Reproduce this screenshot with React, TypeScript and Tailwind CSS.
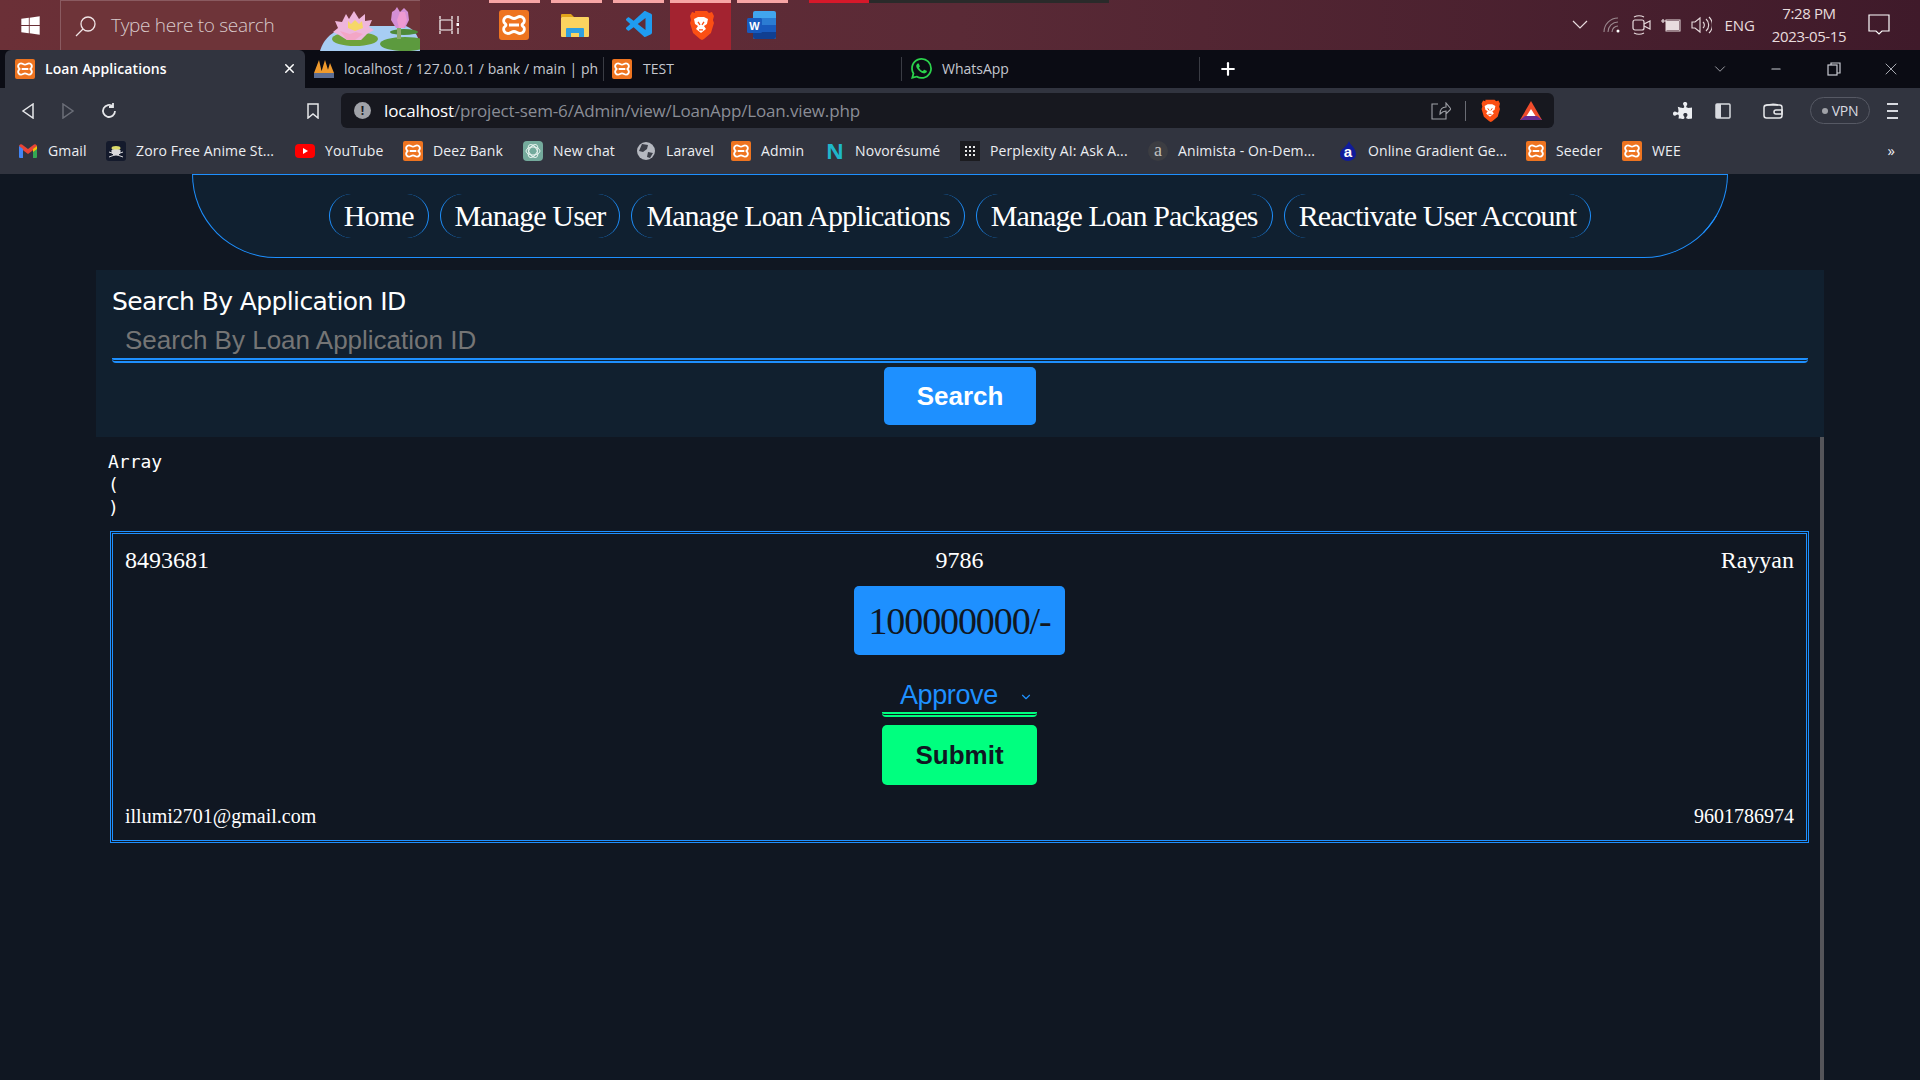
import { ChevronDown, Minus, Plus, X } from 'lucide-react';
import { FaPuzzlePiece, FaWindows } from 'react-icons/fa';
import { SiWhatsapp } from 'react-icons/si';
import { VscVscode } from 'react-icons/vsc';

const navLinks = ['Home', 'Manage User', 'Manage Loan Applications', 'Manage Loan Packages', 'Reactivate User Account'];

// small orange tile used for every localhost favicon
function Xampp({ size = 20 }: { size?: number }) {
  return (
    <svg width={size} height={size} viewBox="0 0 30 30" className="shrink-0">
      <rect width="30" height="30" rx="3" fill="#ee7420" />
      <path
        d="M9 6.5c2.5 0 3.5 2 6 2s3.5-2 6-2a4.3 4.3 0 0 1 3.8 6.3c-.7 1-1.8 1.2-1.8 2.2s1.1 1.2 1.8 2.2A4.3 4.3 0 0 1 21 23.5c-2.5 0-3.5-2-6-2s-3.5 2-6 2a4.3 4.3 0 0 1-3.8-6.3c.7-1 1.8-1.2 1.8-2.2s-1.1-1.2-1.8-2.2A4.3 4.3 0 0 1 9 6.5zM10 15h10"
        fill="none"
        stroke="#fff"
        strokeWidth="2.8"
      />
    </svg>
  );
}

function BraveLion({ size = 30 }: { size?: number }) {
  return (
    <svg width={size} height={size * 1.15} viewBox="0 0 26 30" className="shrink-0">
      <path d="M7 1h12l2 2 3-1 2 4-1 4 1 3-3 10-7 6-2 1-2-1-7-6L2 13l1-3-1-4 2-4 3 1z" fill="#fb4f14" />
      <path d="M6 9l4-2h6l4 2-1 5-3 2 2 3-5 4-5-4 2-3-3-2z" fill="#fff" />
      <path d="M10 12l2 3M16 12l-2 3M11 20h4" stroke="#fb4f14" strokeWidth="1.3" fill="none" />
    </svg>
  );
}

function Lotus() {
  return (
    <svg width="100" height="50" viewBox="0 0 100 50" className="shrink-0">
      <path d="M0 50c4-14 16-24 36-25h50c10 4 14 12 14 25z" fill="#a7cdf3" />
      <ellipse cx="35" cy="38" rx="23" ry="7" fill="#6fa23b" />
      <ellipse cx="85" cy="43" rx="25" ry="7" fill="#5c9a3e" />
      <ellipse cx="84" cy="31" rx="14" ry="3" fill="#4e8a3a" />
      <path d="M26 13l3 5 5-8 5 8 6-5 0 7 7-1-3 7 5 3-7 4-6 6H27l-8-5-6-3 5-4-3-7 7 1z" fill="#eeb6dc" />
      <path d="M28 20l3 3 4-4 4 4 3-3 1 7-8 3-7-3z" fill="#f6d768" />
      <path d="M20 30l10 3 6-2 7 2-8 6h-8z" fill="#f3a6c6" />
      <path d="M77 6l3 5 4-4 4 4 1 8-4 8h-9l-5-8 1-8 3-2z" fill="#d48fd6" />
      <path d="M80 11l5 0 2 8-3 8h-5l-2-8z" fill="#ee9ad2" />
      <path d="M77 27h4v11h-4z" fill="#8aa86a" />
    </svg>
  );
}

function FileExplorer() {
  return (
    <svg width="28" height="23" viewBox="0 0 28 23">
      <path d="M0 1a1 1 0 0 1 1-1h9l3 3H0z" fill="#e0a31a" />
      <rect x="0" y="3" width="28" height="20" rx="1" fill="#fbd35f" />
      <path d="M5 23v-8a1 1 0 0 1 1-1h16a1 1 0 0 1 1 1v8h-5v-4h-8v4z" fill="#2f9fe0" />
    </svg>
  );
}

function WordIcon() {
  return (
    <svg width="29" height="28" viewBox="0 0 29 28">
      <rect x="6" y="0" width="23" height="28" rx="2" fill="#41a5ee" />
      <rect x="6" y="7" width="23" height="7" fill="#2b7cd3" />
      <rect x="6" y="14" width="23" height="7" fill="#185abd" />
      <path d="M6 21h23v5a2 2 0 0 1-2 2H8a2 2 0 0 1-2-2z" fill="#103f91" />
      <rect x="0" y="7" width="15" height="15" rx="1.5" fill="#185abd" />
      <text x="7.5" y="18.5" textAnchor="middle" fontSize="11" fontWeight="700" fill="#fff" fontFamily="Liberation Sans, sans-serif">W</text>
    </svg>
  );
}

function Taskbar() {
  return (
    <div className="relative flex h-[50px] items-center bg-gradient-to-r from-[#6b3037] via-[#5a2a36] to-[#3f1a2a] text-[#f0e4e6]" style={{ fontFamily: '"Open Sans", sans-serif' }}>
      <div className="absolute left-[489px] top-0 flex h-[3px]">
        <span className="w-[51px] bg-[#f7a5a5]" />
        <span className="ml-[11px] w-[51px] bg-[#f7a5a5]" />
        <span className="ml-[11px] w-[51px] bg-[#f7a5a5]" />
        <span className="ml-[6px] w-[61px] bg-[#f7a5a5]" />
        <span className="ml-[6px] w-[51px] bg-[#f7a5a5]" />
        <span className="ml-[21px] w-[60px] bg-[#d7182a]" />
        <span className="w-[240px] bg-[#2a2a2a]" />
      </div>
      <div className="flex w-[60px] justify-center">
        <FaWindows size={21} className="text-white" />
      </div>
      <div className="flex h-[50px] w-[360px] items-center border-l border-t border-[#8a5a60] bg-[#6e3439] pl-[14px]">
        <svg width="22" height="22" viewBox="0 0 22 22" fill="none" stroke="#f0e4e6" strokeWidth="1.3">
          <circle cx="13" cy="9" r="7" />
          <path d="M8 14l-7 7" />
        </svg>
        <span className="ml-[14px] flex-1 whitespace-nowrap text-[19px] font-light tracking-[-0.3px] text-[#d9cacb]">Type here to search</span>
        <Lotus />
      </div>
      <div className="flex h-[50px] items-center">
        <div className="flex w-[58px] justify-center">
          <svg width="20" height="20" viewBox="0 0 20 20" fill="none" stroke="#fff" strokeWidth="1.2">
            <path d="M1 1v3M13 1v3M1 16v3M13 16v3M1 5h12v10H1zM19 1v6M19 13v6" />
            <rect x="17.5" y="8" width="3" height="3" fill="#fff" stroke="none" />
          </svg>
        </div>
        <div className="flex w-[72px] justify-center"><Xampp size={30} /></div>
        <div className="flex w-[50px] justify-center"><FileExplorer /></div>
        <div className="flex w-[70px] justify-center pl-[10px]"><VscVscode size={32} className="text-[#1f9cf0]" /></div>
        <div className="flex h-[50px] w-[61px] items-center justify-center bg-[#a32330]">
          <BraveLion size={26} />
        </div>
        <div className="flex w-[60px] justify-center"><WordIcon /></div>
      </div>
      <div className="ml-auto flex items-center text-[#e8dcde]">
        <svg width="16" height="10" viewBox="0 0 16 10" fill="none" stroke="currentColor" strokeWidth="1.2">
          <path d="M1 1l7 7 7-7" />
        </svg>
        <svg width="18" height="16" viewBox="0 0 18 16" fill="none" stroke="#9c8a90" strokeWidth="1.1" className="ml-[15px]">
          <path d="M1 15A14 14 0 0 1 15 1M5 15A10 10 0 0 1 15 5M9 15a6 6 0 0 1 6-6" />
          <circle cx="15" cy="14" r="1.5" fill="#fff" stroke="none" />
        </svg>
        <svg width="20" height="20" viewBox="0 0 20 20" fill="none" stroke="currentColor" strokeWidth="1.2" className="ml-[11px]">
          <rect x="1" y="5" width="11" height="10" rx="2" />
          <path d="M12 9l6-3v8l-6-3M2 2c3-1.500 7-1.500 10 0M2 18c3 1.500 7 1.500 10 0" />
        </svg>
        <svg width="20" height="14" viewBox="0 0 20 14" className="ml-[9px]">
          <rect x="5" y="2" width="14" height="11" fill="none" stroke="currentColor" />
          <rect x="5" y="3" width="13" height="9" fill="currentColor" />
          <path d="M0 3h5M2 1v4" stroke="currentColor" strokeWidth="1.200" />
        </svg>
        <svg width="21" height="18" viewBox="0 0 21 18" fill="none" stroke="currentColor" strokeWidth="1.1" className="ml-[10px]">
          <path d="M1 6h3l5-4v14l-5-4H1zM12 6a4 4 0 0 1 0 6M15 3a8 8 0 0 1 0 12M18 1a11 11 0 0 1 0 16" />
        </svg>
        <span className="ml-[12px] text-[15px]">ENG</span>
        <div className="ml-[12px] w-[84px] whitespace-nowrap text-center text-[15px] leading-[23px] tracking-[-0.4px]">
          <div>7:28 PM</div>
          <div>2023-05-15</div>
        </div>
        <svg width="22" height="22" viewBox="0 0 22 22" fill="none" stroke="#fff" strokeWidth="1.2" className="ml-[17px] mr-[30px]">
          <path d="M1 1h20v16h-7l-3 3-3-3H1z" />
        </svg>
      </div>
    </div>
  );
}

function Tabs() {
  return (
    <div className="flex h-[38px] items-center bg-[#0b0c14] pl-[5px] text-[14px] text-[#c4c7cf]" style={{ fontFamily: '"Open Sans", sans-serif' }}>
      <div className="flex h-[38px] w-[300px] items-center rounded-t-[6px] bg-[#31343f] pb-[1px] pl-[10px] pr-[8px] text-white">
        <Xampp size={20} />
        <span className="ml-[10px] flex-1 font-semibold tracking-[0.1px]">Loan Applications</span>
        <X size={15} strokeWidth={2.4} />
      </div>
      <div className="flex h-[24px] w-[298px] items-center whitespace-nowrap pb-[1px] pl-[8px]">
        <svg width="22" height="20" viewBox="0 0 22 20" className="shrink-0">
          <path d="M1 14L6 1l3 13zM8 14L12 1l4 13zM14 14l3-10 4 10z" fill="#ef9a2d" />
          <rect x="1" y="14" width="20" height="5" fill="#5b6d94" />
        </svg>
        <span className="ml-[9px] tracking-[0.05px]">localhost / 127.0.0.1 / bank / main | ph</span>
      </div>
      <div className="flex h-[24px] w-[298px] items-center border-l border-[#3a3c44] pb-[1px] pl-[8px]">
        <Xampp size={20} />
        <span className="ml-[11px]">TEST</span>
      </div>
      <div className="flex h-[24px] w-[299px] items-center border-x border-[#3a3c44] pb-[1px] pl-[9px]">
        <SiWhatsapp size={21} className="text-[#2bd24c]" />
        <span className="ml-[10px]">WhatsApp</span>
      </div>
      <Plus size={20} strokeWidth={2.6} className="ml-[18px] text-white" />
      <div className="ml-auto flex items-center text-[#c9cbd2]">
        <ChevronDown size={18} strokeWidth={1} />
        <Minus size={14} className="ml-[40px]" />
        <svg width="14" height="14" viewBox="0 0 14 14" fill="none" stroke="currentColor" strokeWidth="1.2" className="ml-[44px]">
          <rect x="1" y="3" width="9" height="10" />
          <path d="M4 3V1h9v10h-3" />
        </svg>
        <X size={20} strokeWidth={1} className="ml-[40px] mr-[19px]" />
      </div>
    </div>
  );
}

function AddressBar() {
  return (
    <div className="flex h-[40px] items-start bg-[#31343f] pt-[5px] text-[#d8dae0]">
      <div className="flex h-[35px] w-[341px] items-center">
        <svg width="14" height="16" viewBox="0 0 14 16" fill="none" stroke="#e6e7ea" strokeWidth="1.5" className="ml-[21px]">
          <path d="M12 1L2 8l10 7z" />
        </svg>
        <svg width="14" height="16" viewBox="0 0 14 16" fill="none" stroke="#6b6e78" strokeWidth="1.5" className="ml-[26px]">
          <path d="M2 1l10 7-10 7z" />
        </svg>
        <svg width="18" height="18" viewBox="0 0 18 18" fill="none" stroke="#e6e7ea" strokeWidth="1.8" className="ml-[25px]">
          <path d="M15 9a6 6 0 1 1-2-4.500M13 1v4h-4" />
        </svg>
        <svg width="12" height="16" viewBox="0 0 12 16" fill="none" stroke="#e6e7ea" strokeWidth="1.5" className="ml-[189px]">
          <path d="M1 1h10v14l-5-4-5 4z" />
        </svg>
      </div>
      <div className="flex h-[35px] w-[1213px] items-center rounded-[6px] bg-[#17181f] pl-[13px] pr-[12px]" style={{ fontFamily: '"Open Sans", sans-serif' }}>
        <span className="flex h-[17px] w-[17px] items-center justify-center rounded-full bg-[#a0a2a8] text-[12px] font-bold text-[#17181f]">!</span>
        <span className="ml-[13px] flex-1 text-[17px] tracking-[-0.15px] text-white">
          localhost<span className="text-[#8a8d96]">/project-sem-6/Admin/view/LoanApp/Loan.view.php</span>
        </span>
        <svg width="20" height="18" viewBox="0 0 20 18" fill="none" stroke="#a0a2a8" strokeWidth="1.1" className="-translate-x-[2px]">
          <path d="M7 2H1v15h14v-5M9 12c0-5 2-7 6-7V1l5 6-5 5V9c-3 0-4 1-6 3z" />
        </svg>
        <span className="ml-[12px] h-[20px] w-px bg-[#6a6c74]" />
        <span className="ml-[14px]"><BraveLion size={20} /></span>
        <svg width="22" height="20" viewBox="0 0 22 20" className="ml-[20px]">
          <path d="M11 0l11 19H0z" fill="#ef4c2b" />
          <path d="M0 19l5-4h12l5 4z" fill="#662d91" />
          <path d="M11 8l4.500 7h-9z" fill="#fff" />
        </svg>
      </div>
      <div className="flex h-[35px] flex-1 items-center">
        <FaPuzzlePiece size={19} className="ml-[119px] -scale-x-100 text-[#eceef2]" />
        <svg width="16" height="16" viewBox="0 0 16 16" className="ml-[23px]">
          <rect x="1" y="1" width="14" height="14" rx="1" fill="none" stroke="#d8dae0" strokeWidth="1.5" />
          <rect x="1" y="1" width="5" height="14" fill="#d8dae0" />
        </svg>
        <svg width="20" height="16" viewBox="0 0 20 16" fill="none" stroke="#e6e7ea" strokeWidth="1.5" className="ml-[32px]">
          <rect x="1" y="2" width="18" height="13" rx="2.500" />
          <path d="M2 3c3-2 10-2 13-1M13 7h6v4h-6a2 2 0 0 1 0-4z" />
        </svg>
        <span className="ml-[27px] flex h-[27px] w-[60px] items-center justify-center gap-[4px] rounded-full border border-[#565964] text-[14px] tracking-[-0.2px]" style={{ fontFamily: '"Open Sans", sans-serif' }}>
          <span className="h-[6px] w-[6px] rounded-full bg-[#a0a2a8]" />
          VPN
        </span>
        <div className="ml-[17px] flex flex-col gap-[5px]">
          <span className="h-[2px] w-[11px] bg-[#d8dae0]" />
          <span className="h-[2px] w-[11px] bg-[#d8dae0]" />
          <span className="h-[2px] w-[11px] bg-[#d8dae0]" />
        </div>
      </div>
    </div>
  );
}

function GmailIcon() {
  return (
    <svg width="18" height="14" viewBox="0 0 18 14">
      <path d="M0 2a2 2 0 0 1 3-1.500L9 5 15 .5A2 2 0 0 1 18 2l-5 5-4 3-4-3z" fill="#ea4335" />
      <path d="M0 2l4 3v9H1a1 1 0 0 1-1-1z" fill="#4285f4" />
      <path d="M18 2l-4 3v9h3a1 1 0 0 0 1-1z" fill="#34a853" />
      <path d="M14 5l4-3v3l-4 3z" fill="#fbbc04" />
    </svg>
  );
}

function ZoroIcon() {
  return (
    <svg width="20" height="20" viewBox="0 0 20 20">
      <rect width="20" height="20" rx="3" fill="#141a2c" />
      <ellipse cx="10" cy="7" rx="4.500" ry="2" fill="#d9d96a" />
      <path d="M6 9h8v3l-2 2H8l-2-2zM3 11l14 5M17 11L3 16" fill="#d8d8dc" stroke="#d8d8dc" strokeWidth="1" />
    </svg>
  );
}

function YoutubeIcon() {
  return (
    <svg width="20" height="14" viewBox="0 0 20 14">
      <rect width="20" height="14" rx="4" fill="#f00" />
      <path d="M8 4l5 3-5 3z" fill="#fff" />
    </svg>
  );
}

function ChatIcon() {
  return (
    <svg width="20" height="20" viewBox="0 0 20 20" fill="none">
      <rect width="20" height="20" rx="4" fill="#74aa9c" />
      <g stroke="#e6f2ee" strokeWidth="1">
        <ellipse cx="10" cy="10" rx="7" ry="4" />
        <ellipse cx="10" cy="10" rx="7" ry="4" transform="rotate(60 10 10)" />
        <ellipse cx="10" cy="10" rx="7" ry="4" transform="rotate(120 10 10)" />
      </g>
    </svg>
  );
}

function GlobeIcon() {
  return (
    <svg width="18" height="18" viewBox="0 0 18 18">
      <circle cx="9" cy="9" r="9" fill="#b5b8c0" />
      <path d="M5 2l6 1-1 4-4 3-4-1zM11 10l5 1-3 5-3-1z" fill="#3b3e48" />
    </svg>
  );
}

function DotsIcon() {
  return (
    <svg width="20" height="20" viewBox="0 0 20 20">
      <rect width="20" height="20" fill="#1b1b1f" />
      <path d="M5 5h2v2H5zM9 5h2v2H9zM13 5h2v2h-2zM5 9h2v2H5zM9 9h2v2H9zM13 9h2v2h-2zM5 13h2v2H5zM9 13h2v2H9zM13 13h2v2h-2z" fill="#e8e8e8" />
    </svg>
  );
}

function DropIcon() {
  return (
    <span className="relative flex h-[20px] w-[16px] items-end justify-center">
      <svg width="16" height="20" viewBox="0 0 16 20" className="absolute left-0 top-0">
        <path d="M9 0c1 4 7 7 7 13a8 7 0 0 1-16 0C0 8 7 6 9 0z" fill="#101c9a" />
      </svg>
      <span className="relative text-[15px] font-bold leading-[18px] text-white" style={{ fontFamily: '"Liberation Sans", sans-serif' }}>a</span>
    </span>
  );
}

const bookmarks = [
  { label: 'Gmail', width: 88, icon: <GmailIcon /> },
  { label: 'Zoro Free Anime St...', width: 189, icon: <ZoroIcon /> },
  { label: 'YouTube', width: 108, icon: <YoutubeIcon /> },
  { label: 'Deez Bank', width: 120, icon: <Xampp /> },
  { label: 'New chat', width: 113, icon: <ChatIcon /> },
  { label: 'Laravel', width: 95, icon: <GlobeIcon /> },
  { label: 'Admin', width: 94, icon: <Xampp /> },
  { label: 'Novorésumé', width: 135, icon: <span className="pb-[2px] text-[22px] font-bold leading-none text-[#1fb6c9]">N</span> },
  { label: 'Perplexity AI: Ask A...', width: 188, icon: <DotsIcon /> },
  { label: 'Animista - On-Dem...', width: 190, icon: <span className="flex h-[20px] w-[20px] items-center justify-center rounded-full bg-[#3c3d42] pb-[2px] text-[18px] leading-none text-[#c0c0c0]" style={{ fontFamily: '"Liberation Serif", serif' }}>a</span> },
  { label: 'Online Gradient Ge...', width: 188, icon: <DropIcon /> },
  { label: 'Seeder', width: 96, icon: <Xampp /> },
  { label: 'WEE', width: 80, icon: <Xampp /> },
];

function Bookmarks() {
  return (
    <div className="flex h-[46px] items-center bg-[#31343f] pb-[1px] pl-[18px] text-[14px] text-[#eceef2]" style={{ fontFamily: '"Open Sans", sans-serif' }}>
      {bookmarks.map((b) => (
        <div key={b.label} className="flex shrink-0 items-center gap-[10px] whitespace-nowrap tracking-[0.12px]" style={{ width: b.width }}>
          <span className="flex w-[20px] justify-center">{b.icon}</span>
          <span>{b.label}</span>
        </div>
      ))}
      <span className="ml-auto mr-[25px] text-[15px]">»</span>
    </div>
  );
}

function LoanCard() {
  return (
    <div className="flex h-[312px] flex-col border-[3px] border-double border-[#1e90ff] px-[12px] pb-[12px] pt-[12px] text-white" style={{ fontFamily: '"Liberation Serif", serif' }}>
      <div className="grid grid-cols-3 text-[24px] leading-[28px]">
        <span>8493681</span>
        <span className="text-center">9786</span>
        <span className="text-right">Rayyan</span>
      </div>
      <div className="flex flex-1 flex-col items-center">
        <div className="mt-[12px] flex h-[69px] w-[211px] items-center justify-center rounded-[5px] bg-[#1e90ff] pt-[2px] text-[38px] tracking-[-1.1px] text-[#101722]">100000000/-</div>
        <div className="relative mt-[20px] flex h-[42px] w-[155px] items-center rounded-b-[4px] border-b-[5px] border-double border-[#00ff7f] pl-[18px] pt-[3px] text-[27px] tracking-[-0.4px] text-[#1e90ff]" style={{ fontFamily: '"Liberation Sans", sans-serif' }}>
          Approve
          <ChevronDown size={14} strokeWidth={2} className="absolute right-[4px] top-[15px]" />
        </div>
        <div className="mt-[8px] flex h-[60px] w-[155px] items-center justify-center rounded-[5px] bg-[#00ff7f] text-[26px] font-bold text-[#101722]" style={{ fontFamily: '"Liberation Sans", sans-serif' }}>Submit</div>
      </div>
      <div className="flex items-center justify-between text-[20px] leading-[24px]">
        <span>illumi2701@gmail.com</span>
        <span>9601786974</span>
      </div>
    </div>
  );
}

export default function App() {
  return (
    <div className="flex h-[1080px] flex-col overflow-hidden bg-[#101722]">
      <Taskbar />
      <Tabs />
      <AddressBar />
      <Bookmarks />
      <nav className="mx-auto flex h-[84px] w-[1536px] items-center justify-center gap-[11px] rounded-b-[85px] border border-[#1e90ff] bg-[#102030] pb-[1px] text-[30px] tracking-[-0.9px] text-white" style={{ fontFamily: '"Liberation Serif", serif' }}>
        {navLinks.map((link) => (
          <a key={link} className="rounded-[24px] border-x border-[#1e90ff] px-[14px] py-[3px] leading-[38px]">{link}</a>
        ))}
      </nav>
      <div className="mx-auto mt-[12px] flex w-[1728px] flex-1 flex-col">
        <div className="h-[167px] bg-[#11202f] px-[16px] pt-[17px]">
          <div className="text-[25px] leading-[30px] tracking-[-0.6px] text-white" style={{ fontFamily: '"DejaVu Sans", sans-serif' }}>Search By Application ID</div>
          <div className="flex h-[46px] items-center rounded-b-[4px] border-b-[5px] border-double border-[#1e90ff] pl-[13px] pt-[6px] text-[26px] text-[#757575]" style={{ fontFamily: '"Liberation Sans", sans-serif' }}>Search By Loan Application ID</div>
          <div className="mt-[4px] flex justify-center">
            <button className="h-[58px] w-[152px] rounded-[5px] bg-[#1e90ff] text-[26px] font-bold text-white" style={{ fontFamily: '"Liberation Sans", sans-serif' }}>Search</button>
          </div>
        </div>
        <div className="flex-1 border-r-[4px] border-[#55555a] pl-[12px] pr-[11px]">
          <pre className="pt-[13px] text-[18px] leading-[23px] text-white" style={{ fontFamily: '"DejaVu Sans Mono", monospace' }}>{'Array\n(\n)'}</pre>
          <div className="ml-[2px] mt-[12px]"><LoanCard /></div>
        </div>
      </div>
    </div>
  );
}
